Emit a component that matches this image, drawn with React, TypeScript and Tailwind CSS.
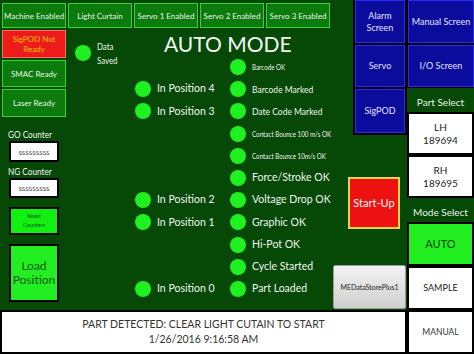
import React from 'react';

const topButtons = ['Machine Enabled', 'Light Curtain', 'Servo 1 Enabled', 'Servo 2 Enabled', 'Servo 3 Enabled'];

const leftLabels: (string | null)[] = [
  null,
  'In Position 4',
  'In Position 3',
  null,
  null,
  null,
  'In Position 2',
  'In Position 1',
  null,
  null,
  'In Position 0',
];

const rightLabels = [
  { text: 'Barcode OK', cls: 'text-[8px] scale-x-[0.78]' },
  { text: 'Barcode Marked', cls: 'text-[10px] scale-x-[0.85]' },
  { text: 'Date Code Marked', cls: 'text-[10px] scale-x-[0.85]' },
  { text: 'Contact Bounce 100 m/s OK', cls: 'text-[8px] scale-x-[0.78]' },
  { text: 'Contact Bounce 10m/s OK', cls: 'text-[8px] scale-x-[0.78]' },
  { text: 'Force/Stroke OK', cls: 'text-[10.5px]' },
  { text: 'Voltage Drop OK', cls: 'text-[10.5px]' },
  { text: 'Graphic OK', cls: 'text-[10.5px]' },
  { text: 'Hi-Pot OK', cls: 'text-[10.5px]' },
  { text: 'Cycle Started', cls: 'text-[10.5px]' },
  { text: 'Part Loaded', cls: 'text-[10.5px]' },
];

const Lamp = () => <div className="w-[16px] h-[16px] rounded-full bg-[#1ff01f] shrink-0" />;

const BlueButton = ({ label, h }: { label: string; h: string }) => (
  <div
    className={`${h} bg-[#0b0b9c] shadow-[inset_0_0_0_1px_#2a2af0] flex items-center justify-center text-center text-[9px] leading-[12px] text-[#e4e4ff]`}
  >
    {label}
  </div>
);

export default function App() {
  return (
    <div className="w-[474px] h-[354px] bg-[#064806] flex flex-col overflow-hidden font-['Lato','Open_Sans',sans-serif]">
      <div className="flex h-[310px]">
        {/* main panel */}
        <div className="w-[333px] shrink-0 flex flex-col">
          <div className="h-[30px] flex gap-[2px] pl-[2px] pt-[3px]">
            {topButtons.map((b) => (
              <div
                key={b}
                className="w-[64px] h-[25px] shrink-0 bg-[#0d7a0d] border border-[#35d435] flex items-center justify-center text-[8px] text-[#e6f6e6]"
              >
                {b}
              </div>
            ))}
          </div>
          <div className="flex grow">
            {/* left column */}
            <div className="w-[68px] shrink-0 flex flex-col px-[2px]">
              <div className="h-[28px] bg-[#ee1b1b] border border-[#ff6a6a] flex items-center justify-center text-center text-[8px] leading-[10px] text-[#ffc000]">
                SigPOD Not
                <br />
                Ready
              </div>
              <div className="mt-[2px] h-[27px] bg-[#0d7a0d] border border-[#35d435] flex items-center justify-center text-[8px] text-[#e6f6e6]">
                SMAC Ready
              </div>
              <div className="mt-[2px] h-[28px] bg-[#0d7a0d] border border-[#35d435] flex items-center justify-center text-[8px] text-[#e6f6e6]">
                Laser Ready
              </div>
              <div className="mt-[10px] h-[14px] flex items-center pl-[6px]">
                <span className="text-[10px] text-[#eef6ee] scale-x-[0.82] origin-left whitespace-nowrap">GO Counter</span>
              </div>
              <div className="ml-[7px] w-[50px] h-[21px] bg-white border-2 border-black flex items-center justify-center text-[8px] text-[#555]">
                sssssssss
              </div>
              <div className="mt-[2px] h-[14px] flex items-center pl-[6px]">
                <span className="text-[10px] text-[#eef6ee] scale-x-[0.82] origin-left whitespace-nowrap">NG Counter</span>
              </div>
              <div className="ml-[7px] w-[50px] h-[20px] bg-white border-2 border-black flex items-center justify-center text-[8px] text-[#555]">
                sssssssss
              </div>
              <div className="mt-[9px] ml-[7px] w-[50px] h-[28px] bg-[#11f011] border-2 border-black flex items-center justify-center text-center text-[5.5px] leading-[9px] text-[#0a5a0a]">
                Reset
                <br />
                Counters
              </div>
              <div className="mt-[9px] ml-[7px] w-[50px] h-[58px] bg-[#22ee22] border-2 border-black flex items-center justify-center text-center text-[12px] leading-[14px] text-[#0b5b0b]">
                Load
                <br />
                Position
              </div>
            </div>
            {/* data saved */}
            <div className="w-[67px] shrink-0 flex flex-col">
              <div className="mt-[15px] ml-[7px] flex items-start gap-[6px]">
                <Lamp />
                <div className="text-[10px] leading-[14px] text-[#eef6ee] scale-x-[0.78] origin-left -mt-[6px]">
                  Data
                  <br />
                  Saved
                </div>
              </div>
            </div>
            {/* indicators */}
            <div className="flex-1 min-w-0 flex flex-col">
              <div className="h-[26px] flex items-center pl-[29px] pt-[2px] text-[21px] leading-[24px] text-[#f4f8f4] whitespace-nowrap">
                AUTO MODE
              </div>
              <div className="flex flex-col">
                {rightLabels.map((r, i) => (
                  <div key={r.text} className="h-[22.2px] grid grid-cols-[95px_1fr] items-center">
                    <div className="flex items-center">
                      {leftLabels[i] && (
                        <>
                          <Lamp />
                          <span className="ml-[6px] text-[10.5px] text-[#eef6ee] whitespace-nowrap">{leftLabels[i]}</span>
                        </>
                      )}
                    </div>
                    <div className="flex items-center">
                      <Lamp />
                      <span className={`ml-[6px] text-[#eef6ee] whitespace-nowrap origin-left inline-block ${r.cls}`}>
                        {r.text}
                      </span>
                    </div>
                  </div>
                ))}
              </div>
            </div>
          </div>
        </div>

        {/* middle column */}
        <div className="w-[74px] shrink-0 flex flex-col">
          <div className="ml-[20px] w-[54px] bg-black flex flex-col gap-[2px] pl-[2px] pr-[2px] pb-[2px]">
            <BlueButton label="Alarm Screen" h="h-[43px] px-[8px]" />
            <BlueButton label="Servo" h="h-[42px]" />
            <BlueButton label="SigPOD" h="h-[44px]" />
          </div>
          <div className="mt-[42px] ml-[15px] w-[52px] h-[52px] bg-[#ee1111] border-2 border-[#e8d44a] flex items-center justify-center text-[11px] text-white">
            Start-Up
          </div>
          <div className="mt-[36px] w-[73px] h-[44px] bg-gradient-to-b from-[#f2f2f2] to-[#cfcfcf] border border-[#9a9a9a] rounded-[2px] flex items-center justify-center text-[7px] text-[#222]">
            MEDataStorePlus1
          </div>
        </div>

        {/* right column */}
        <div className="w-[67px] shrink-0 flex flex-col">
          <div className="bg-black flex flex-col gap-[2px] pl-[1px] pb-[1px]">
            <BlueButton label="Manual Screen" h="h-[43px]" />
            <BlueButton label="I/O Screen" h="h-[42px]" />
          </div>
          <div className="h-[24px] flex items-end justify-center pb-[2px] text-[10px] text-[#e6f6e6]">Part Select</div>
          <div className="h-[43px] bg-white border-2 border-black flex items-center justify-center text-center text-[10px] leading-[13px] text-[#222]">
            LH
            <br />
            189694
          </div>
          <div className="h-[43px] bg-white border-2 border-black flex items-center justify-center text-center text-[10px] leading-[13px] text-[#222]">
            RH
            <br />
            189695
          </div>
          <div className="h-[24px] flex items-end justify-center pb-[2px] text-[10px] text-[#e6f6e6]">Mode Select</div>
          <div className="h-[44px] bg-[#22ee22] border-2 border-black flex items-center justify-center text-[11px] text-[#0b4b0b]">
            AUTO
          </div>
          <div className="h-[44px] bg-white border-2 border-black flex items-center justify-center text-[9px] text-[#222]">
            SAMPLE
          </div>
        </div>
      </div>

      {/* status bar */}
      <div className="flex h-[44px]">
        <div className="w-[407px] shrink-0 bg-white border-2 border-black flex flex-col items-center justify-center text-[10.5px] leading-[15px] text-[#333]">
          <div>PART DETECTED: CLEAR LIGHT CUTAIN TO START</div>
          <div>1/26/2016 9:16:58 AM</div>
        </div>
        <div className="flex-1 bg-white border-2 border-black flex items-center justify-center text-[8.5px] text-[#333]">
          MANUAL
        </div>
      </div>
    </div>
  );
}
